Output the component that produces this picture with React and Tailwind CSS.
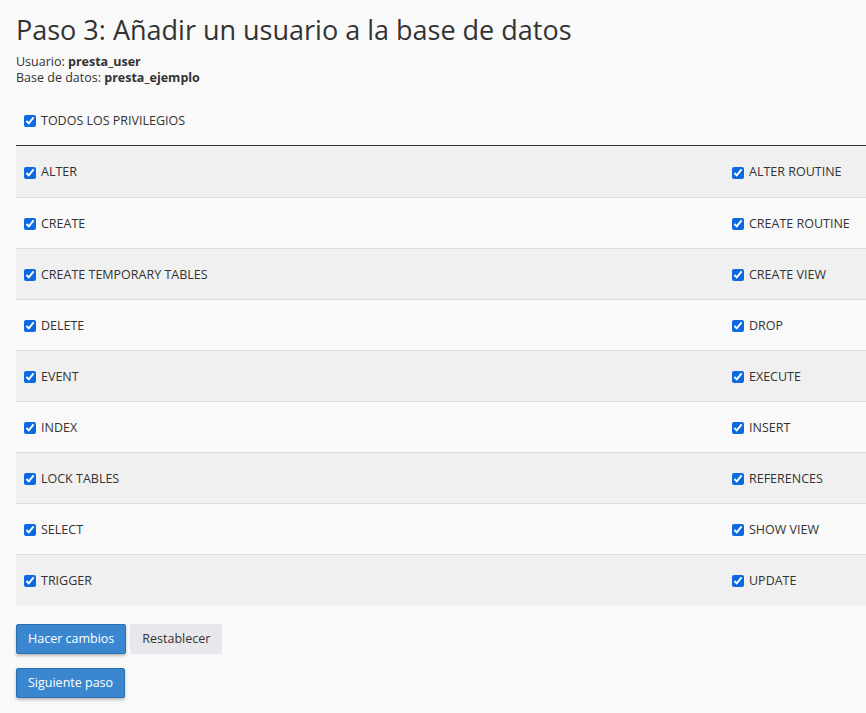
import React from "react";

const rows = [
  ["ALTER", "ALTER ROUTINE"],
  ["CREATE", "CREATE ROUTINE"],
  ["CREATE TEMPORARY TABLES", "CREATE VIEW"],
  ["DELETE", "DROP"],
  ["EVENT", "EXECUTE"],
  ["INDEX", "INSERT"],
  ["LOCK TABLES", "REFERENCES"],
  ["SELECT", "SHOW VIEW"],
  ["TRIGGER", "UPDATE"],
];

function Check({ label }) {
  return (
    <label className="flex items-center gap-[5px]">
      <input type="checkbox" defaultChecked className="m-0 h-[12px] w-[12px] accent-[#0b6ae0]" />
      <span>{label}</span>
    </label>
  );
}

export default function App() {
  return (
    <div className="min-h-[713px] bg-[#f9f9f9] pl-4 pt-[14px] text-[#333] text-[12.5px]" style={{ fontFamily: '"Open Sans", sans-serif' }}>
      <h1 className="text-[27px] leading-[32px] font-normal m-0">Paso 3: Añadir un usuario a la base de datos</h1>
      <div className="mt-[8px] leading-[16px]">
        <div>Usuario: <b>presta_user</b></div>
        <div>Base de datos: <b>presta_ejemplo</b></div>
      </div>
      <div className="mt-[25px] pl-2 h-[20px] flex items-center">
        <Check label="TODOS LOS PRIVILEGIOS" />
      </div>
      <div className="mt-[14px] border-t border-[#333]">
        {rows.map(([a, b], i) => (
          <div
            key={a}
            className={`flex h-[51px] pt-[2px] items-center justify-between ${i % 2 === 0 ? "bg-[#f0f0f0]" : "bg-[#f9f9f9]"} ${i > 0 ? "border-t border-[#dddddd]" : ""}`}
          >
            <div className="pl-2"><Check label={a} /></div>
            <div className="w-[142px] pl-2"><Check label={b} /></div>
          </div>
        ))}
      </div>
      <div className="mt-[19px] flex gap-[4px]">
        <button className="h-[30px] px-[11px] bg-[#3a87d0] border border-[#2a6fb0] rounded-[2px] text-white shadow-[0_2px_3px_rgba(0,0,0,0.25)]">Hacer cambios</button>
        <button className="h-[30px] px-[12px] bg-[#e8e8ec] text-[#333] rounded-[2px]">Restablecer</button>
      </div>
      <div className="mt-[14px]">
        <button className="h-[30px] px-[11px] bg-[#3a87d0] border border-[#2a6fb0] rounded-[2px] text-white shadow-[0_2px_3px_rgba(0,0,0,0.25)]">Siguiente paso</button>
      </div>
    </div>
  );
}
